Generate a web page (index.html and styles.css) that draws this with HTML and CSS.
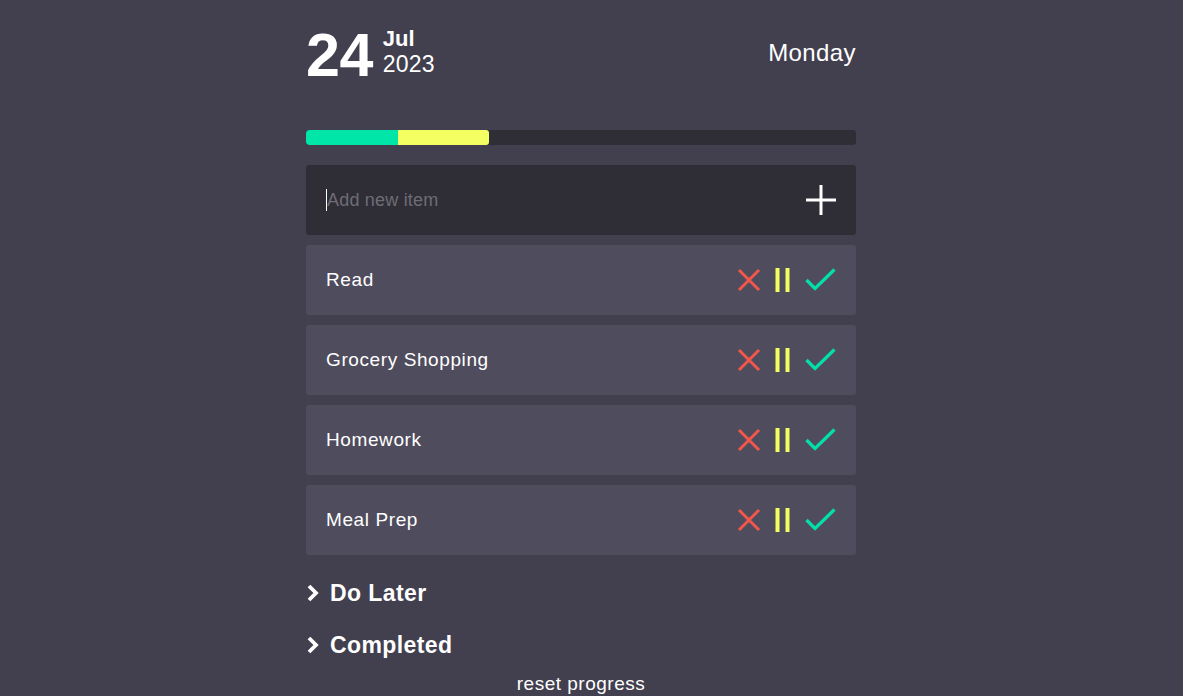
FILE: index.html
```html
<!DOCTYPE html>
<html>
<head>
<meta charset="utf-8">
<link rel="stylesheet" href="styles.css">
</head>
<body>
<div class="app">
  <header class="header">
    <div class="date">
      <span class="day">24</span>
      <div class="monthyear">
        <span class="month">Jul</span>
        <span class="year">2023</span>
      </div>
    </div>
    <div class="weekday">Monday</div>
  </header>

  <div class="progress">
    <div class="seg done" style="width:16.7%"></div>
    <div class="seg later" style="width:16.6%"></div>
  </div>

  <div class="add">
    <span class="caret"></span>
    <span class="placeholder">Add new item</span>
    <svg class="plus" width="30" height="30" viewBox="0 0 30 30"><path d="M15 0V30M0 15H30" stroke="#fff" stroke-width="3"/></svg>
  </div>

  <ul class="list">
    <li class="item"><span class="label">Read</span><span class="actions">
      <svg class="ic" width="24" height="24" viewBox="0 0 24 24"><path d="M2 2L22 22M22 2L2 22" stroke="#f1574a" stroke-width="3"/></svg>
      <svg class="ic" width="16" height="24" viewBox="0 0 16 24"><path d="M2.5 0V24M12.5 0V24" stroke="#f4ff5e" stroke-width="4"/></svg>
      <svg class="ic" width="32" height="24" viewBox="0 0 32 24"><path d="M1.5 12L10 20.5L29.5 1.5" stroke="#00e0a8" stroke-width="3.2" fill="none"/></svg>
    </span></li>
    <li class="item"><span class="label">Grocery Shopping</span><span class="actions">
      <svg class="ic" width="24" height="24" viewBox="0 0 24 24"><path d="M2 2L22 22M22 2L2 22" stroke="#f1574a" stroke-width="3"/></svg>
      <svg class="ic" width="16" height="24" viewBox="0 0 16 24"><path d="M2.5 0V24M12.5 0V24" stroke="#f4ff5e" stroke-width="4"/></svg>
      <svg class="ic" width="32" height="24" viewBox="0 0 32 24"><path d="M1.5 12L10 20.5L29.5 1.5" stroke="#00e0a8" stroke-width="3.2" fill="none"/></svg>
    </span></li>
    <li class="item"><span class="label">Homework</span><span class="actions">
      <svg class="ic" width="24" height="24" viewBox="0 0 24 24"><path d="M2 2L22 22M22 2L2 22" stroke="#f1574a" stroke-width="3"/></svg>
      <svg class="ic" width="16" height="24" viewBox="0 0 16 24"><path d="M2.5 0V24M12.5 0V24" stroke="#f4ff5e" stroke-width="4"/></svg>
      <svg class="ic" width="32" height="24" viewBox="0 0 32 24"><path d="M1.5 12L10 20.5L29.5 1.5" stroke="#00e0a8" stroke-width="3.2" fill="none"/></svg>
    </span></li>
    <li class="item"><span class="label">Meal Prep</span><span class="actions">
      <svg class="ic" width="24" height="24" viewBox="0 0 24 24"><path d="M2 2L22 22M22 2L2 22" stroke="#f1574a" stroke-width="3"/></svg>
      <svg class="ic" width="16" height="24" viewBox="0 0 16 24"><path d="M2.5 0V24M12.5 0V24" stroke="#f4ff5e" stroke-width="4"/></svg>
      <svg class="ic" width="32" height="24" viewBox="0 0 32 24"><path d="M1.5 12L10 20.5L29.5 1.5" stroke="#00e0a8" stroke-width="3.2" fill="none"/></svg>
    </span></li>
  </ul>

  <div class="section"><svg class="chev" width="14" height="20" viewBox="0 0 14 20"><path d="M3 3L10 10L3 17" stroke="#fff" stroke-width="3.8" fill="none"/></svg><span>Do Later</span></div>
  <div class="section"><svg class="chev" width="14" height="20" viewBox="0 0 14 20"><path d="M3 3L10 10L3 17" stroke="#fff" stroke-width="3.8" fill="none"/></svg><span>Completed</span></div>

  <div class="reset">reset progress</div>
</div>
</body>
</html>
```

FILE: styles.css
```css
* { box-sizing: border-box; }
html, body { margin: 0; padding: 0; }
body {
  background: #42404f;
  color: #fff;
  font-family: "Liberation Sans", Arial, sans-serif;
  height: 696px;
  overflow: hidden;
}
.app {
  width: 550px;
  margin-left: 306px;
  padding-top: 24px;
}
.header {
  display: flex;
  justify-content: space-between;
  align-items: center;
  height: 62px;
}
.date {
  display: flex;
  align-items: center;
}
.day {
  font-size: 61px;
  font-weight: 700;
  line-height: 62px;
  letter-spacing: -0.5px;
}
.monthyear {
  display: flex;
  flex-direction: column;
  margin-left: 10px;
  margin-top: -5px;
}
.month {
  font-size: 22px;
  font-weight: 700;
  line-height: 24px;
}
.year {
  font-size: 23px;
  line-height: 27px;
  font-weight: 400;
  letter-spacing: 0.2px;
}
.weekday {
  font-size: 24px;
  font-weight: 400;
  letter-spacing: 0.4px;
  margin-top: -4px;
}
.progress {
  margin-top: 44px;
  height: 15px;
  background: #2f2e36;
  border-radius: 3px;
  display: flex;
  overflow: hidden;
}
.seg { height: 100%; }
.seg.done { background: #00e5a8; border-radius: 3px 0 0 3px; }
.seg.later { background: #f4ff62; border-radius: 0 3px 3px 0; }
.add {
  margin-top: 20px;
  height: 70px;
  background: #2f2e36;
  border-radius: 3px;
  display: flex;
  align-items: center;
  padding: 0 20px 0 20px;
}
.caret {
  width: 1px;
  height: 22px;
  background: #fff;
}
.placeholder {
  font-size: 18px;
  color: #6e6c75;
  flex: 1;
  letter-spacing: 0.2px;
}
.plus { display: block; }
.list {
  list-style: none;
  margin: 10px 0 0;
  padding: 0;
  display: flex;
  flex-direction: column;
  gap: 10px;
}
.item {
  height: 70px;
  background: #4f4c5d;
  border-radius: 3px;
  display: flex;
  align-items: center;
  justify-content: space-between;
  padding: 0 19px 0 20px;
}
.label { font-size: 19px; letter-spacing: 0.6px; }
.actions {
  display: flex;
  align-items: center;
  gap: 14px;
}
.ic { display: block; }
.section {
  display: flex;
  align-items: center;
  margin-top: 24px;
  height: 28px;
  font-size: 23px;
  font-weight: 700;
  letter-spacing: 0.4px;
}
.section + .section { margin-top: 24px; }
.chev { margin: 0 10px 0 0; display: block; }
.reset {
  text-align: center;
  font-size: 19px;
  letter-spacing: 0.5px;
  margin-top: 14px;
  width: 550px;
}
```
